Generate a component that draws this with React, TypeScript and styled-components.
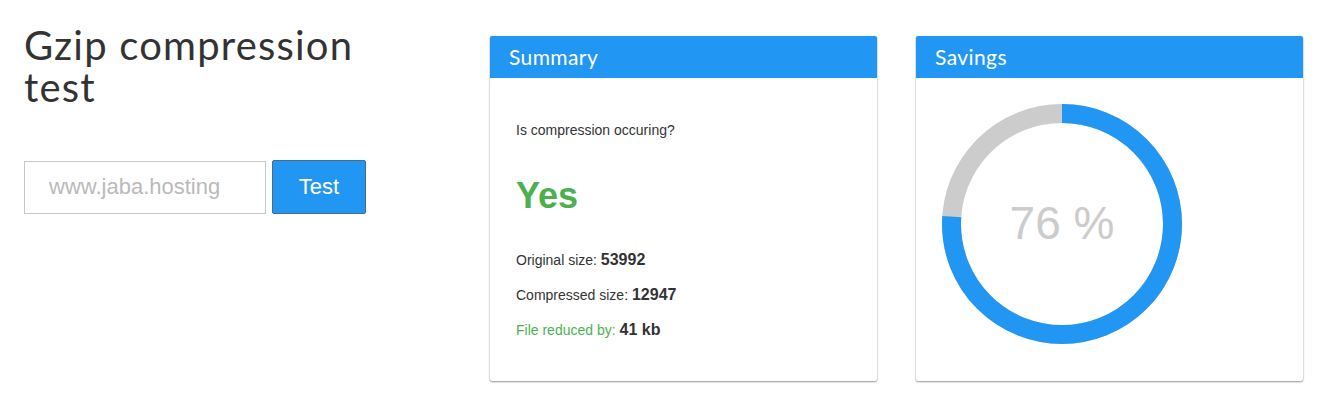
import React from 'react';
import styled, { createGlobalStyle } from 'styled-components';

const GlobalStyle = createGlobalStyle`
    html, body {
        margin: 0;
        background: #fff;
        font-family: "Liberation Sans", Arial, sans-serif;
        color: #333;
    }
`;

const Page = styled.div`
    display: grid;
    grid-template-columns: 427px 387px 387px;
    column-gap: 39px;
    align-items: start;
    padding: 24px 0 35px 24px;
    min-height: 416px;
    box-sizing: border-box;
`;

const TestColumn = styled.div`
    display: flex;
    flex-direction: column;
`;

const Title = styled.h1`
    margin: 0;
    font-family: Lato, "Open Sans", sans-serif;
    font-weight: 400;
    font-size: 40px;
    letter-spacing: 1.2px;
    line-height: 42px;
    color: #333;
    width: 370px;
`;

const TestForm = styled.form`
    display: flex;
    align-items: center;
    gap: 6px;
    margin-top: 52px;
`;

const UrlInput = styled.input`
    box-sizing: border-box;
    width: 242px;
    height: 53px;
    border: 1px solid #c8c8c8;
    padding: 0 0 0 24px;
    font-family: "Liberation Sans", Arial, sans-serif;
    font-size: 22px;
    color: #555;
    outline: none;

    &::placeholder {
        color: #bababa;
    }
`;

const TestButton = styled.button`
    box-sizing: border-box;
    width: 94px;
    height: 54px;
    background: #2196f3;
    border: 1px solid #4a6a8a;
    border-radius: 2px;
    color: #fff;
    font-family: "Liberation Sans", Arial, sans-serif;
    font-size: 22px;
    cursor: pointer;
`;

const Card = styled.section`
    margin-top: 12px;
    display: flex;
    flex-direction: column;
    height: 345px;
    background: #fff;
    border-radius: 2px;
    box-shadow: 0 1px 2px rgba(0, 0, 0, 0.4), 0 0 1px rgba(0, 0, 0, 0.25);
`;

const CardHeader = styled.header`
    height: 42px;
    line-height: 42px;
    padding: 0 19px;
    background: #2196f3;
    border-radius: 2px 2px 0 0;
    color: #fff;
    font-family: Lato, "Open Sans", sans-serif;
    font-size: 21px;
    letter-spacing: 0.4px;
`;

const CardBody = styled.div`
    padding: 26px;
`;

const Question = styled.p`
    margin: 16px 0 0;
    font-size: 14px;
    line-height: 20px;
`;

const Answer = styled.div`
    margin-top: 36px;
    font-size: 36px;
    line-height: 40px;
    font-weight: 700;
    color: #4caf50;
`;

const StatRow = styled.p<{ $first?: boolean; $accent?: boolean }>`
    margin: ${(p) => (p.$first ? '34px' : '15px')} 0 0;
    font-size: 14px;
    line-height: 20px;
    color: ${(p) => (p.$accent ? '#4caf50' : '#333')};
`;

const StatValue = styled.strong`
    font-size: 16px;
    font-weight: 700;
    color: #333;
`;

const DonutWrap = styled.div`
    position: relative;
    width: 240px;
    height: 240px;
`;

const DonutLabel = styled.div`
    position: absolute;
    inset: 0;
    display: flex;
    align-items: center;
    justify-content: center;
    font-size: 46px;
    color: #cccccc;
    padding-bottom: 3px;
    box-sizing: border-box;
`;

const Donut = ({ percent }: { percent: number }) => {
    const r = 110.5;
    const c = 2 * Math.PI * r;
    const filled = (percent / 100) * c;
    return (
        <DonutWrap>
            <svg width="240" height="240" viewBox="0 0 240 240">
                <circle cx="120" cy="120" r={r} fill="none" stroke="#cccccc" strokeWidth="19" />
                <circle
                    cx="120"
                    cy="120"
                    r={r}
                    fill="none"
                    stroke="#2196f3"
                    strokeWidth="19"
                    strokeDasharray={`${filled} ${c}`}
                    transform="rotate(-90 120 120)"
                />
            </svg>
            <DonutLabel>{percent} %</DonutLabel>
        </DonutWrap>
    );
};

const App = () => {
    const original = 53992;
    const compressed = 12947;
    const saved = Math.round((1 - compressed / original) * 100);
    const reducedKb = Math.round((original - compressed) / 1000);

    return (
        <>
            <GlobalStyle />
            <Page>
                <TestColumn>
                    <Title>Gzip compression test</Title>
                    <TestForm onSubmit={(e) => e.preventDefault()}>
                        <UrlInput type="text" placeholder="www.jaba.hosting" />
                        <TestButton type="submit">Test</TestButton>
                    </TestForm>
                </TestColumn>

                <Card>
                    <CardHeader>Summary</CardHeader>
                    <CardBody>
                        <Question>Is compression occuring?</Question>
                        <Answer>Yes</Answer>
                        <StatRow $first>
                            Original size: <StatValue>{original}</StatValue>
                        </StatRow>
                        <StatRow>
                            Compressed size: <StatValue>{compressed}</StatValue>
                        </StatRow>
                        <StatRow $accent>
                            File reduced by: <StatValue>{reducedKb} kb</StatValue>
                        </StatRow>
                    </CardBody>
                </Card>

                <Card>
                    <CardHeader>Savings</CardHeader>
                    <CardBody>
                        <Donut percent={saved} />
                    </CardBody>
                </Card>
            </Page>
        </>
    );
};

export default App;
